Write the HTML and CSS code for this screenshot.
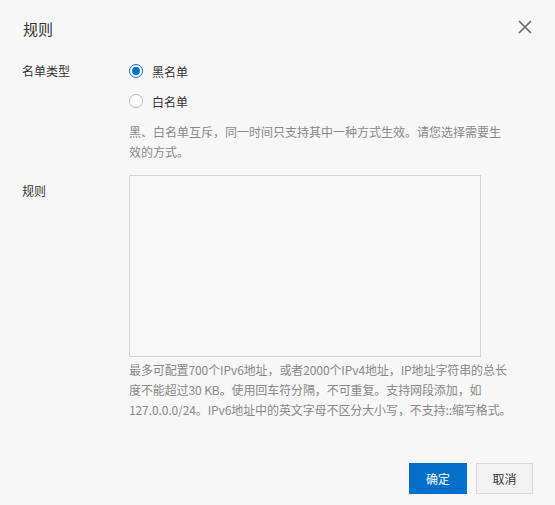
FILE: index.html
```html
<!DOCTYPE html>
<html lang="zh-CN">
<head>
<meta charset="utf-8">
<title>规则</title>
<link rel="stylesheet" href="styles.css">
</head>
<body>
<div class="dialog">
  <div class="header">
    <div class="title">规则</div>
    <button class="close" aria-label="关闭">
      <svg width="14" height="14" viewBox="0 0 14 14"><path d="M1 1L13 13M13 1L1 13" stroke="#666" stroke-width="1.6" fill="none"/></svg>
    </button>
  </div>
  <div class="form">
    <div class="row">
      <div class="label label-radio">名单类型</div>
      <div class="field">
        <label class="radio-item"><span class="radio checked"></span><span class="radio-text">黑名单</span></label>
        <label class="radio-item"><span class="radio"></span><span class="radio-text">白名单</span></label>
        <div class="help help-top">黑、白名单互斥，同一时间只支持其中一种方式生效。请您选择需要生效的方式。</div>
      </div>
    </div>
    <div class="row row-rules">
      <div class="label label-area">规则</div>
      <div class="field">
        <div class="textarea"></div>
        <div class="help help-bottom">最多可配置700个IPv6地址，或者2000个IPv4地址，IP地址字符串的总长度不能超过30 KB。使用回车符分隔，不可重复。支持网段添加，如127.0.0.0/24。IPv6地址中的英文字母不区分大小写，不支持::缩写格式。</div>
      </div>
    </div>
  </div>
  <div class="footer">
    <button class="btn btn-primary">确定</button>
    <button class="btn btn-default">取消</button>
  </div>
</div>
</body>
</html>
```

FILE: styles.css
```css
html, body {
  margin: 0;
  padding: 0;
  background: #f7f7f7;
}
body {
  font-family: "Noto Sans CJK SC", "Noto Sans", sans-serif;
  color: #333;
  font-size: 12px;
}
.dialog {
  width: 555px;
  height: 505px;
  box-sizing: border-box;
  padding: 0 22px;
}
.header {
  height: 56px;
  display: flex;
  align-items: center;
  justify-content: space-between;
}
.title {
  font-size: 15px;
  color: #333;
  padding-left: 1px;
}
.close {
  border: 0;
  background: none;
  padding: 0;
  margin-right: 1px;
  margin-top: -2px;
  width: 14px;
  height: 14px;
  display: flex;
}
.row {
  display: flex;
}
.label {
  width: 107px;
  flex: none;
  color: #333;
}
.label-radio {
  line-height: 30px;
}
.label-area {
  line-height: 20px;
  padding-top: 6px;
}
.field {
  display: flex;
  flex-direction: column;
}
.radio-item {
  height: 30px;
  display: flex;
  align-items: center;
  color: #333;
}
.radio {
  width: 14px;
  height: 14px;
  box-sizing: border-box;
  border: 1px solid #bbb;
  border-radius: 50%;
  background: #fff;
  margin-right: 9px;
  position: relative;
}
.radio.checked {
  border-color: #0070cc;
}
.radio.checked::after {
  content: "";
  position: absolute;
  left: 2px;
  top: 2px;
  width: 8px;
  height: 8px;
  border-radius: 50%;
  background: #0070cc;
}
.help {
  color: #888;
  line-height: 20px;
  width: 383px;
}
.help-top {
  margin-top: 6px;
}
.row-rules {
  margin-top: 13px;
}
.textarea {
  width: 352px;
  height: 182px;
  box-sizing: border-box;
  border: 1px solid #d4d4d4;
  background: #f8f8f8;
}
.help-bottom {
  margin-top: 3px;
  letter-spacing: -0.1px;
}
.footer {
  display: flex;
  justify-content: flex-end;
  gap: 9px;
  margin-top: 43px;
}
.btn {
  height: 31px;
  width: 58px;
  font-family: inherit;
  font-size: 12px;
  padding: 0;
  border-radius: 0;
}
.btn-primary {
  background: #0070cc;
  border: 1px solid #0070cc;
  color: #fff;
}
.btn-default {
  width: 57px;
  background: #f3f3f3;
  border: 1px solid #d7d7d7;
  color: #333;
}
```
